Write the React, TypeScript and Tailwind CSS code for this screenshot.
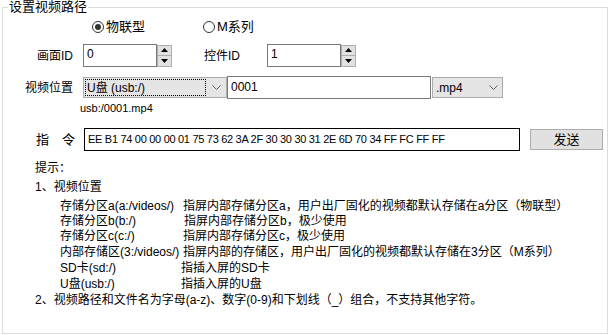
import React from 'react';

const chevron = (
  <svg width="9" height="5" viewBox="0 0 9 5" className="shrink-0">
    <path d="M0.5 0.5L4.5 4.5L8.5 0.5" fill="none" stroke="#606060" strokeWidth="1" />
  </svg>
);

function Radio({ checked, label }: { checked?: boolean; label: string }) {
  return (
    <div className="flex items-center gap-[2px]">
      <div className="flex h-[12px] w-[12px] items-center justify-center rounded-full border border-[#333]">
        {checked && <div className="h-[6px] w-[6px] rounded-full bg-[#333]" />}
      </div>
      <span className="text-[13px] leading-[14px]">{label}</span>
    </div>
  );
}

function Spin() {
  return (
    <div className="flex h-[23px] w-[15px] flex-col justify-center">
      <div className="flex h-[11px] items-center justify-center border border-[#adadad] bg-[#e1e1e1]">
        <svg width="7" height="4" viewBox="0 0 7 4">
          <path d="M3.5 0L7 4H0Z" fill="#000" />
        </svg>
      </div>
      <div className="flex h-[11px] items-center justify-center border border-t-0 border-[#adadad] bg-[#e1e1e1]">
        <svg width="7" height="4" viewBox="0 0 7 4">
          <path d="M0 0H7L3.5 4Z" fill="#000" />
        </svg>
      </div>
    </div>
  );
}

function SpinBox({ value }: { value: string }) {
  return (
    <div className="flex items-center">
      <div className="flex h-[23px] w-[74px] items-start border border-[#7a7a7a] pl-[3px] pt-[2px] text-[12px] leading-[14px]">
        {value}
      </div>
      <Spin />
    </div>
  );
}

const rows = [
  { a: '存储分区a(a:/videos/)', b: '指屏内部存储分区a，用户出厂固化的视频都默认存储在a分区（物联型）', off: 'ml-0', h: 'h-[15px]' },
  { a: '存储分区b(b:/)', b: '指屏内部存储分区b，极少使用', off: 'ml-[1px]', h: 'h-[15px]' },
  { a: '存储分区c(c:/)', b: '指屏内部存储分区c，极少使用', off: 'ml-0', h: 'h-[16px]' },
  { a: '内部存储区(3:/videos/)', b: '指屏内部的存储区，用户出厂固化的视频都默认存储在3分区（M系列）', off: 'ml-0', h: 'h-[16px]' },
  { a: 'SD卡(sd:/)', b: '指插入屏的SD卡', off: '-ml-[2px]', h: 'h-[16px]' },
  { a: 'U盘(usb:/)', b: '指插入屏的U盘', off: '-ml-[2px]', h: 'h-[16px]' },
];

export default function App() {
  return (
    <div className="h-[335px] w-[608px] overflow-hidden bg-white font-['Liberation_Sans','Noto_Sans_CJK_SC',sans-serif] text-[12px] text-black">
      <fieldset className="ml-[2px] h-[334px] w-[606px] border border-[#dcdcdc]">
        <legend className="ml-[5px] px-[1px] text-[13px] leading-[14px]">设置视频路径</legend>

        {/* 类型 */}
        <div className="mt-[6px] flex h-[14px] items-center pl-[89px]">
          <div className="w-[111px]">
            <Radio checked label="物联型" />
          </div>
          <Radio label="M系列" />
        </div>

        {/* 画面ID / 控件ID */}
        <div className="mt-[10px] flex h-[23px] items-center">
          <div className="w-[70px] text-right text-[12px]">画面ID</div>
          <div className="ml-[10px]">
            <SpinBox value="0" />
          </div>
          <div className="ml-[32px] w-[63px] text-[12px]">控件ID</div>
          <SpinBox value="1" />
        </div>

        {/* 视频位置 */}
        <div className="mt-[9px] flex h-[23px] items-center">
          <div className="w-[70px] text-right text-[12px]">视频位置</div>
          <div className="ml-[10px] flex h-[21px] w-[144px] items-center border border-[#adadad] bg-[#e5e5e5] pr-[5px]">
            <div className="ml-[1px] flex h-[17px] w-[121px] items-center border border-dotted border-black pl-[1px] text-[12px]">
              U盘 (usb:/)
            </div>
            <div className="flex flex-1 justify-end">{chevron}</div>
          </div>
          <div className="flex h-[23px] w-[204px] items-start border border-[#7a7a7a] pl-[3px] pt-[3px] text-[12px] leading-[14px]">
            0001
          </div>
          <div className="ml-[1px] flex h-[21px] w-[71px] items-center justify-between border border-[#adadad] bg-[#e5e5e5] pl-[3px] pr-[4px] text-[12px]">
            <span>.mp4</span>
            {chevron}
          </div>
        </div>

        <div className="mt-[2px] flex h-[14px] items-center pl-[77px] text-[11px]">usb:/0001.mp4</div>

        {/* 指令 */}
        <div className="mt-[13px] flex h-[23px] items-center">
          <span className="ml-[33px] text-[13px]">指</span>
          <span className="ml-[13px] text-[13px]">令</span>
          <div className="ml-[9px] flex h-[23px] w-[436px] items-center border border-black pl-[3px] text-[11px] tracking-[-0.3px]">
            EE B1 74 00 00 00 01 75 73 62 3A 2F 30 30 30 31 2E 6D 70 34 FF FC FF FF
          </div>
          <button className="ml-[10px] flex h-[21px] w-[73px] items-center justify-center border border-[#adadad] bg-[#e1e1e1] text-[13px]">
            发送
          </button>
        </div>

        {/* 提示 */}
        <div className="mt-[8px] flex flex-col pl-[32px] text-[12px] leading-[19px]">
          <div>提示：</div>
          <div>1、视频位置</div>
        </div>
        <div className="mt-[1px] flex flex-col pl-[57px] text-[12px]">
          {rows.map((r) => (
            <div key={r.a} className={`flex items-center ${r.h}`}>
              <div className="w-[123px] shrink-0">{r.a}</div>
              <div className={`whitespace-nowrap ${r.off}`}>{r.b}</div>
            </div>
          ))}
        </div>
        <div className="flex h-[16px] items-center pl-[32px] text-[12px]">
          2、视频路径和文件名为字母(a-z)、数字(0-9)和下划线（_）组合，不支持其他字符。
        </div>
      </fieldset>
    </div>
  );
}
